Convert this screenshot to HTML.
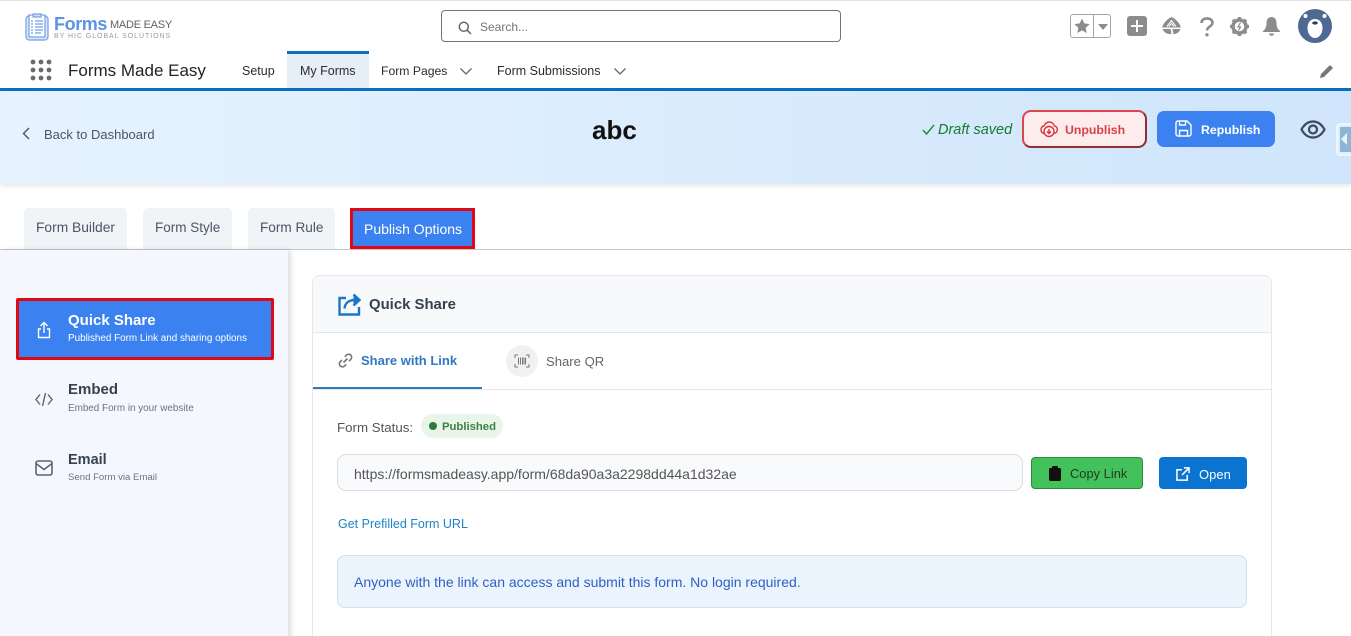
<!DOCTYPE html>
<html><head><meta charset="utf-8"><title>Forms Made Easy</title>
<style>
*{box-sizing:border-box}
html,body{margin:0;padding:0;width:1351px;height:636px;overflow:hidden;background:#fff;font-family:"Liberation Sans",sans-serif}
#w{position:relative;width:1351px;height:636px;overflow:hidden}
.a{position:absolute}
.t{position:absolute;white-space:nowrap;line-height:1}
svg{position:absolute;overflow:visible}
</style></head><body><div id="w">
<div class="a" style="left:0;top:0;width:1351px;height:1px;background:#e4e4e4"></div>

<!-- logo -->
<svg style="left:25px;top:13px" width="24" height="28" viewBox="0 0 24 28" fill="none" stroke="#6f9fe8" stroke-width="1.200"><rect x="1" y="3" width="22" height="24" rx="3" fill="#dce8fa"/><rect x="4" y="2" width="16" height="22" fill="#fff"/><rect x="8" y="1" width="8" height="3" fill="#cfe0f8"/><path d="M10 8h8M10 11h8M10 14h8M10 17h8M10 20h6M6 8h2M6 11h2M6 14h2M6 17h2M6 20h2"/></svg>
<div class="t" style="left:54px;top:15px;font-size:18px;font-weight:700;color:#5b93e6;letter-spacing:-.4px">Forms</div>
<div class="t" style="left:110px;top:20px;font-size:11px;color:#5f6368;letter-spacing:-.25px">MADE EASY</div>
<div class="t" style="left:54px;top:33px;font-size:7px;color:#9a9a9a;letter-spacing:.95px">BY HIC GLOBAL SOLUTIONS</div>

<!-- search -->
<div class="a" style="left:441px;top:10px;width:400px;height:32px;border:1px solid #747474;border-radius:4px;background:#fff"></div>
<svg style="left:458px;top:21px" width="14" height="14" viewBox="0 0 14 14" fill="none" stroke="#666" stroke-width="1.500"><circle cx="5.800" cy="5.800" r="4.500"/><path d="M9.200 9.200L13 13"/></svg>
<div class="t" style="left:480px;top:21px;font-size:12px;color:#747474">Search...</div>

<!-- global actions -->
<div class="a" style="left:1070px;top:14px;width:41px;height:24px;border:1px solid #a5a5a5;border-radius:3px"></div>
<div class="a" style="left:1093px;top:14px;width:1px;height:24px;background:#a5a5a5"></div>
<svg style="left:1073px;top:17px" width="18" height="18" viewBox="0 0 18 18"><path d="M9 1.500l2.300 4.900 5.300.7-3.900 3.600 1 5.300L9 13.400 4.300 16l1-5.300L1.400 7.100l5.300-.7z" fill="#8c8c8c"/></svg>
<svg style="left:1098px;top:24px" width="10" height="6" viewBox="0 0 10 6"><path d="M0 0h10L5 6z" fill="#8c8c8c"/></svg>
<div class="a" style="left:1127px;top:16px;width:20px;height:20px;border-radius:3px;background:#8c8c8c"></div>
<svg style="left:1130px;top:19px" width="14" height="14" viewBox="0 0 14 14" stroke="#fff" stroke-width="2"><path d="M7 1v12M1 7h12"/></svg>
<svg style="left:1161px;top:16px" width="21" height="20" viewBox="0 0 21 20"><path d="M10.500 1C6 3 2.500 7 1 11.500h19C18.500 7 15 3 10.500 1z" fill="#8c8c8c"/><path d="M1.500 13h8l1 5C6 18.500 3 16.500 1.500 13zM11.500 13h8c-1.500 3.500-4 5-7 5.300z" fill="#8c8c8c"/><path d="M6 10.500l4.500-6 4.500 6M8 10.500l2.500-3 2.500 3" fill="none" stroke="#fff" stroke-width="1.100"/></svg>
<svg style="left:1200px;top:17px" width="14" height="20" viewBox="0 0 14 20" fill="none" stroke="#8c8c8c" stroke-width="2.600"><path d="M1.500 6c0-3 2.300-4.600 5.500-4.600s5.500 1.800 5.500 4.400c0 3.800-5.500 3.700-5.500 7.700"/><circle cx="7" cy="17.800" r="1.700" fill="#8c8c8c" stroke="none"/></svg>
<svg style="left:1230px;top:17px" width="19" height="19" viewBox="0 0 19 19"><circle cx="9.500" cy="9.500" r="6.500" fill="none" stroke="#8c8c8c" stroke-width="3.500"/><path d="M9.500 0v3M9.500 16v3M0 9.500h3M16 9.500h3M2.800 2.800l2.100 2.100M14.100 14.100l2.100 2.100M2.800 16.200l2.100-2.100M14.100 4.900l2.100-2.100" stroke="#8c8c8c" stroke-width="3.200"/><path d="M10.500 5.500L8 10h2.500L8.500 13.500" fill="none" stroke="#8c8c8c" stroke-width="1.200"/></svg>
<svg style="left:1262px;top:16px" width="19" height="20" viewBox="0 0 19 20"><path d="M9.500 1C6 1 4.500 4 4.500 7c0 4-1 6-3.500 8v1h17v-1c-2.500-2-3.500-4-3.500-8 0-3-1.500-6-5-6z" fill="#8c8c8c"/><path d="M7 17.500h5c0 1.500-1 2.300-2.500 2.300S7 19 7 17.500z" fill="#8c8c8c"/></svg>
<svg style="left:1298px;top:9px" width="34" height="34" viewBox="0 0 34 34"><circle cx="17" cy="17" r="17" fill="#4f6a92"/><circle cx="7.500" cy="7" r="2" fill="#fff"/><circle cx="26.500" cy="7" r="2" fill="#fff"/><path d="M17 10c4 0 7.500 3 7.500 9 0 6-3.500 10-7.500 10s-7.500-4-7.500-10c0-6 3.500-9 7.500-9z" fill="#fff"/><ellipse cx="17" cy="14" rx="2.800" ry="1.600" fill="#2e3e58"/></svg>

<!-- nav -->
<svg style="left:30px;top:59px" width="22" height="22" viewBox="0 0 22 22" fill="#6b6b6b"><circle cx="3" cy="3" r="2.400"/><circle cx="11" cy="3" r="2.400"/><circle cx="19" cy="3" r="2.400"/><circle cx="3" cy="11" r="2.400"/><circle cx="11" cy="11" r="2.400"/><circle cx="19" cy="11" r="2.400"/><circle cx="3" cy="19" r="2.400"/><circle cx="11" cy="19" r="2.400"/><circle cx="19" cy="19" r="2.400"/></svg>
<div class="t" style="left:68px;top:62px;font-size:17px;color:#222">Forms Made Easy</div>
<div class="t" style="left:242px;top:65px;font-size:12.500px;color:#2b2b2b">Setup</div>
<div class="a" style="left:287px;top:51px;width:82px;height:37px;background:#e6eef8;border-top:3px solid #0b6fc2"></div>
<div class="t" style="left:300px;top:65px;font-size:12.500px;color:#2b2b2b">My Forms</div>
<div class="t" style="left:381px;top:65px;font-size:12.200px;color:#2b2b2b">Form Pages</div>
<svg style="left:460px;top:68px" width="12" height="7" viewBox="0 0 12 7" fill="none" stroke="#666" stroke-width="1.300"><path d="M.5.500L6 6l5.500-5.500"/></svg>
<div class="t" style="left:497px;top:65px;font-size:12.500px;color:#2b2b2b">Form Submissions</div>
<svg style="left:614px;top:68px" width="12" height="7" viewBox="0 0 12 7" fill="none" stroke="#666" stroke-width="1.300"><path d="M.5.500L6 6l5.500-5.500"/></svg>
<svg style="left:1320px;top:64px" width="14" height="14" viewBox="0 0 14 14"><path d="M0 14l1-4L10 1l3 3-9 9z" fill="#777"/></svg>
<div class="a" style="left:0;top:88px;width:1351px;height:3px;background:#0b6fc2"></div>

<!-- page header -->
<div class="a" style="left:0;top:91px;width:1351px;height:93px;background:linear-gradient(90deg,#e6f3fe,#cfe5fb);box-shadow:0 2px 5px rgba(0,0,0,.1)"></div>
<svg style="left:22px;top:127px" width="8" height="13" viewBox="0 0 8 13" fill="none" stroke="#4a5568" stroke-width="1.400"><path d="M7 1L1.500 6.500 7 12"/></svg>
<div class="t" style="left:44px;top:128px;font-size:13px;color:#4b5563">Back to Dashboard</div>
<div class="t" style="left:592px;top:117px;font-size:26px;font-weight:700;color:#111">abc</div>
<svg style="left:922px;top:124px" width="13" height="11" viewBox="0 0 13 11" fill="none" stroke="#1f8a3b" stroke-width="1.400"><path d="M1 6l3.500 4L12 1"/></svg>
<div class="t" style="left:938px;top:123px;font-size:14.500px;font-style:italic;color:#157a2c">Draft saved</div>
<div class="a" style="left:1022px;top:110px;width:125px;height:38px;border:2px solid;border-color:#d9474b #8f2f35 #8f2f35 #d9474b;border-radius:9px;background:#fdecec"></div>
<svg style="left:1040px;top:121px" width="18" height="17" viewBox="0 0 18 17" fill="none" stroke="#d9343c" stroke-width="1.400"><path d="M5 12.500C2 12.500 1 10.500 1 8.500s1.500-3.500 3-3.500C5 2.500 7 1 9.500 1 12 1 14 3 14.300 5c2 .2 3 1.800 3 3.500s-1 4-3.800 4"/><circle cx="9" cy="10.500" r="5"/><path d="M9 8v4.500M7 10.500l2 2 2-2"/></svg>
<div class="t" style="left:1065px;top:124px;font-size:12.300px;font-weight:700;color:#d9414a">Unpublish</div>
<div class="a" style="left:1157px;top:111px;width:118px;height:36px;border-radius:7px;background:#3b82f0"></div>
<svg style="left:1175px;top:120px" width="17" height="17" viewBox="0 0 17 17" fill="none" stroke="#fff" stroke-width="1.400"><path d="M1 3a2 2 0 012-2h9l4 4v9a2 2 0 01-2 2H3a2 2 0 01-2-2z"/><path d="M4.500 16v-5.500h8V16M4.500 1v4h6V1"/></svg>
<div class="t" style="left:1201px;top:124px;font-size:12.300px;font-weight:700;color:#fff">Republish</div>
<svg style="left:1300px;top:120px" width="26" height="19" viewBox="0 0 26 19" fill="none" stroke="#3f4a5a" stroke-width="2.200"><path d="M1.500 9.500C4.500 4 8.500 1.500 13 1.500S21.500 4 24.500 9.500C21.500 15 17.500 17.500 13 17.500S4.500 15 1.500 9.500z"/><circle cx="13" cy="9.500" r="4"/></svg>
<div class="a" style="left:1336px;top:123px;width:15px;height:33px;background:#e0eefb;border:2px solid #eef6fd;border-right:0;border-radius:4px 0 0 4px"></div>
<div class="a" style="left:1340px;top:127px;width:11px;height:25px;background:#8db6d6"></div>
<svg style="left:1341px;top:133px" width="6" height="12" viewBox="0 0 6 12"><path d="M6 0v12L0 6z" fill="#e6f1fb"/></svg>

<!-- tabs -->
<div class="a" style="left:24px;top:208px;width:103px;height:41px;background:#f1f4f7;border-radius:5px 5px 0 0"></div>
<div class="t" style="left:36px;top:221px;font-size:13.800px;color:#4b5563">Form Builder</div>
<div class="a" style="left:143px;top:208px;width:89px;height:41px;background:#f1f4f7;border-radius:5px 5px 0 0"></div>
<div class="t" style="left:155px;top:221px;font-size:13.500px;color:#4b5563">Form Style</div>
<div class="a" style="left:248px;top:208px;width:87px;height:41px;background:#f1f4f7;border-radius:5px 5px 0 0"></div>
<div class="t" style="left:260px;top:221px;font-size:13.600px;color:#4b5563">Form Rule</div>
<div class="a" style="left:0;top:249px;width:1351px;height:1px;background:#c8c8c8"></div>
<div class="a" style="left:350px;top:208px;width:125px;height:41px;background:#3b82f0;border:3px solid #e30613"></div>
<div class="t" style="left:364px;top:222px;font-size:14px;color:#fff">Publish Options</div>

<!-- sidebar -->
<div class="a" style="left:0;top:250px;width:288px;height:400px;background:#f4f8fe;box-shadow:3px 0 5px rgba(0,0,0,.13)"></div>
<div class="a" style="left:16px;top:298px;width:258px;height:62px;background:#3b82f0;border:3px solid #e30613;border-radius:2px"></div>
<svg style="left:37px;top:321px" width="14" height="18" viewBox="0 0 14 18" fill="none" stroke="#fff" stroke-width="1.400"><path d="M7 12V1.500M3.500 5L7 1.500 10.500 5M4 8H1.500v8.500h11V8H10"/></svg>
<div class="t" style="left:68px;top:313px;font-size:15px;font-weight:700;color:#fff">Quick Share</div>
<div class="t" style="left:68px;top:334px;font-size:9.900px;color:#fff">Published Form Link and sharing options</div>
<svg style="left:35px;top:392px" width="18" height="15" viewBox="0 0 18 15" fill="none" stroke="#5b6472" stroke-width="1.400"><path d="M5 2.500L1 7.500l4 5M13 2.500l4 5-4 5M10.500 1l-3 13"/></svg>
<div class="t" style="left:68px;top:382px;font-size:15px;font-weight:700;color:#374151">Embed</div>
<div class="t" style="left:68px;top:404px;font-size:9.900px;color:#6b7280">Embed Form in your website</div>
<svg style="left:35px;top:460px" width="18" height="16" viewBox="0 0 18 16" fill="none" stroke="#5b6472" stroke-width="1.600"><rect x="1" y="1" width="16" height="14" rx="2"/><path d="M1 3.500L9 9.500l8-6"/></svg>
<div class="t" style="left:68px;top:453px;font-size:14.500px;font-weight:700;color:#374151">Email</div>
<div class="t" style="left:68px;top:473px;font-size:9.600px;color:#6b7280">Send Form via Email</div>

<!-- card -->
<div class="a" style="left:312px;top:275px;width:960px;height:380px;background:#fff;border:1px solid #e6e8ec;border-radius:8px"></div>
<div class="a" style="left:313px;top:276px;width:958px;height:57px;background:#f8f9fb;border-bottom:1px solid #e3e6ea;border-radius:8px 8px 0 0"></div>
<svg style="left:338px;top:293px" width="23" height="23" viewBox="0 0 23 23" fill="none" stroke="#1b76c9" stroke-width="2.400"><path d="M8 5H1.500v16.500h19.500V14"/><path d="M6.500 15.500C7 10 11 7 17 7"/><path d="M15.500 1.500L21.500 7l-6 5.500" fill="#1b76c9"/></svg>
<div class="t" style="left:369px;top:298px;font-size:14.900px;font-weight:700;color:#374151">Quick Share</div>

<svg style="left:338px;top:353px" width="15" height="15" viewBox="0 0 15 15" fill="none" stroke="#777" stroke-width="1.600"><path d="M5.500 9.500l4-4"/><path d="M6.800 3.700l1.600-1.600a3 3 0 014.400 4.200L11 8"/><path d="M8.200 11.300l-1.600 1.600a3 3 0 01-4.400-4.200L4 7"/></svg>
<div class="t" style="left:361px;top:354px;font-size:13px;font-weight:700;color:#2f79bf">Share with Link</div>
<div class="a" style="left:506px;top:345px;width:32px;height:32px;border-radius:50%;background:#f3f1f0"></div>
<svg style="left:514px;top:354px" width="16" height="14" viewBox="0 0 16 14" fill="none" stroke="#777" stroke-width="1"><path d="M1 4V1h3M12 1h3v3M15 10v3h-3M4 13H1v-3M4.500 3.500v7M6.500 3.500v7M8.500 3.500v7M10 3.500v7M11.500 3.500v7"/></svg>
<div class="t" style="left:546px;top:355px;font-size:13.100px;color:#666">Share QR</div>
<div class="a" style="left:313px;top:389px;width:958px;height:1px;background:#e3e6ea"></div>
<div class="a" style="left:313px;top:387px;width:169px;height:2px;background:#2f79bf"></div>

<div class="t" style="left:337px;top:421px;font-size:13.300px;color:#555">Form Status:</div>
<div class="a" style="left:421px;top:414px;width:82px;height:24px;border-radius:12px;background:#e8f5e9"></div>
<div class="a" style="left:429px;top:422px;width:8px;height:8px;border-radius:50%;background:#2e7d32"></div>
<div class="t" style="left:442px;top:422px;font-size:11.300px;font-weight:700;color:#3f7f45">Published</div>

<div class="a" style="left:337px;top:454px;width:686px;height:37px;background:#f8fafc;border:1px solid #d8dde3;border-radius:9px"></div>
<div class="t" style="left:354px;top:467px;font-size:14px;color:#555">https://formsmadeasy.app/form/68da90a3a2298dd44a1d32ae</div>
<div class="a" style="left:1031px;top:457px;width:112px;height:32px;background:#43c15a;border:1px solid #2f8a44;border-radius:4px"></div>
<svg style="left:1048px;top:466px" width="14" height="15" viewBox="0 0 14 15"><rect x="1" y="2" width="12" height="13" rx="1.500" fill="#111"/><rect x="4" y="0" width="6" height="4" rx="1" fill="#111"/></svg>
<div class="t" style="left:1070px;top:468px;font-size:12.900px;color:#213d28">Copy Link</div>
<div class="a" style="left:1159px;top:457px;width:88px;height:32px;background:#0b74d1;border-radius:4px"></div>
<svg style="left:1176px;top:467px" width="14" height="14" viewBox="0 0 15 15" fill="none" stroke="#fff" stroke-width="1.600"><path d="M6.500 3H1v11h11V8.500M8.500 1H14v5.500M14 1L6.500 8.500"/></svg>
<div class="t" style="left:1199px;top:468px;font-size:13px;color:#fff">Open</div>

<div class="t" style="left:338px;top:518px;font-size:12.500px;color:#1f84c6">Get Prefilled Form URL</div>
<div class="a" style="left:337px;top:555px;width:910px;height:53px;background:#ebf4fd;border:1px solid #cfe0f2;border-radius:8px"></div>
<div class="t" style="left:354px;top:575px;font-size:14px;color:#2f5fc4">Anyone with the link can access and submit this form. No login required.</div>
</div></body></html>
